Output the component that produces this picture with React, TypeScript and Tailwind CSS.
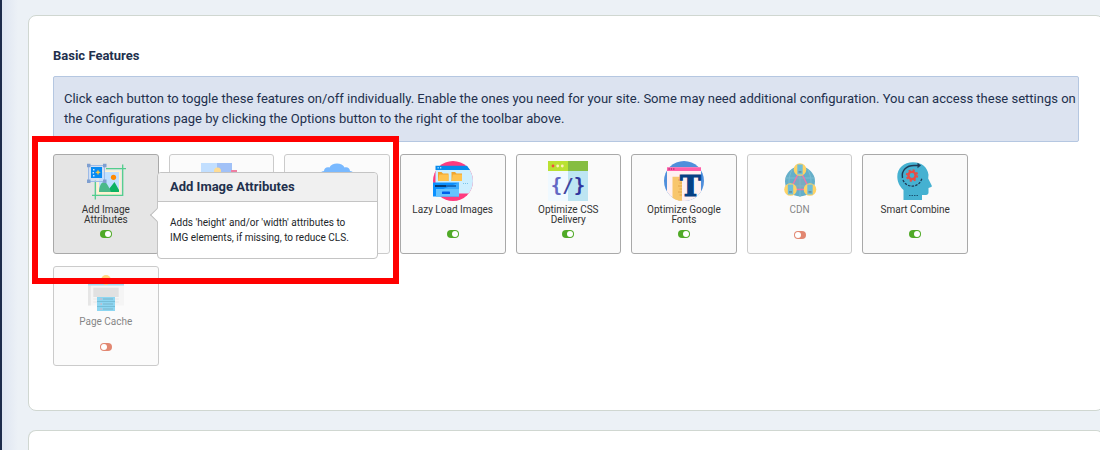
import type { ReactNode } from 'react'
import { clsx } from 'clsx'

interface Feature {
  name: string
  enabled: boolean
  icon: ReactNode
  hint?: string
}

function Icon({ children }: { children: ReactNode }) {
  return (
    <svg viewBox="0 0 40 40" className="h-10 w-10 shrink-0" aria-hidden="true">
      {children}
    </svg>
  )
}

function AttributesIcon() {
  return (
    <Icon>
      <path d="M10.700 9.500h24v24h-24z" fill="#fff3cf" />
      <path d="M13 11h20v20H13z" fill="#c0e0ff" />
      <circle cx="27.5" cy="16.3" r="2.6" fill="#ff8a00" />
      <path d="m20 31 1-4 2 1 5.500-7L33 29v2z" fill="#0cb262" />
      <path d="M13 31c0-6 2.500-10 5-10s5 5 7 10z" fill="#4bb98a" />
      <path d="M9.300 19v19.500M6 34.300h31M36.700 3.500V35M20 7.700h20" stroke="#52cd8d" strokeWidth="1.300" />
      <path d="M2.500 4.500h16v16h-16z" fill="#c9dcf8" fillOpacity=".7" stroke="#9dbbe8" />
      <path d="M1 2.700h3.500v3.500H1zM17 2.700h3.500v3.500H17zM1 18.500h3.500V22H1zM17 18.500h3.500V22H17z" fill="#7f9fd0" />
      <path d="M5 6h11v11H5z" fill="#078bf2" />
      <path d="m12 8.500.8 2 2 .8-2 .9-.8 2-.8-2-2-.9 2-.8z" fill="#ffc83c" />
      <path d="M7 8h1.500v1.500H7zM6.500 11H8v1.500H6.500zM7 14h1.500v1.500H7z" fill="#c9e8ff" />
    </Icon>
  )
}

function PictureIcon() {
  return (
    <Icon>
      <path d="M0 2h16v27H0z" fill="#9acbff" />
      <path d="M16 2h15v27H16z" fill="#6499f2" />
      <path d="m0 29 11-13 8 9 5-7 7 11z" fill="#40b983" />
      <circle cx="16.500" cy="10" r="3.500" fill="#ffc64d" />
      <path d="M30 9h6v25H11v-5h19z" fill="#e42b65" />
    </Icon>
  )
}

function CloudIcon() {
  return (
    <Icon>
      <path
        d="M3 17c-1-4 1-7 4-7 0-3 3-4.500 5.500-3.500 2-5.500 13-5.500 15 0 2.500-1 5.500.5 5.500 3.500 3 0 5 3 4 7v8H3z"
        fill="#218bff"
      />
    </Icon>
  )
}

function LazyIcon() {
  return (
    <Icon>
      <clipPath id="lazy-clip">
        <circle cx="20" cy="20" r="20" />
      </clipPath>
      <circle cx="20" cy="20" r="20" fill="#ff3b7f" />
      <path d="M2.500 8H40v24.500H2.500z" fill="#cdefff" clipPath="url(#lazy-clip)" />
      <path d="M2.500 4.700H34L37 9H2.500z" fill="#078bed" />
      <path d="M4.500 6h1.300v1.500H4.500zM7 6h1.300v1.500H7z" fill="#a2ddff" />
      <path d="M5 11h3.500l1.500 1.500h5.500V20H5zM18.500 11H22l1.500 1.500H29V20H18.500z" fill="#f0a52f" />
      <path d="M6.300 13.500h9.200V20H5zM19.800 13.500H29V20H18.500z" fill="#ffc34f" />
      <path d="M30 22.500h6" stroke="#79c4ec" strokeDasharray="1 1" />
      <path d="M0 21.500h26V35.500H0z" fill="#0a90ff" />
      <path d="M3 28h23v7.500H3z" fill="#65c3ff" />
      <path d="M26 21.500V35.500H3V31z" fill="#65c3ff" fillOpacity=".55" />
      <path d="M2 25h11" stroke="#073c73" strokeWidth="2" />
      <path d="M13 25h10" stroke="#176bbb" strokeWidth="2" />
      <rect x="9" y="30.500" width="8" height="2.500" rx=".6" fill="#005fe9" />
    </Icon>
  )
}

function CssIcon() {
  return (
    <Icon>
      <path d="M0 0h20v40H0z" fill="#f0f9ff" />
      <path d="M20 2h20v38H20z" fill="#bde5f2" />
      <path d="M0 0h20v10H0z" fill="#bae133" />
      <path d="M20 0h20v10H20z" fill="#86bd42" />
      <circle cx="5" cy="5" r="1.400" fill="#f24d3d" />
      <circle cx="9.700" cy="5" r="1.400" fill="#fff0bd" />
      <circle cx="14.300" cy="5" r="1.400" fill="#fff0bd" />
      <text x="20" y="31" textAnchor="middle" fontFamily="DejaVu Sans Mono, monospace" fontWeight="700" fontSize="19">
        <tspan fill="#6268c4">{'{'}</tspan>
        <tspan fill="#40449e">/</tspan>
        <tspan fill="#30359d">{'}'}</tspan>
      </text>
    </Icon>
  )
}

function FontIcon() {
  return (
    <Icon>
      <clipPath id="font-clip">
        <circle cx="20" cy="20" r="20" />
      </clipPath>
      <circle cx="20" cy="20" r="20" fill="#508fdb" />
      <path d="M3 6.300h34V40H3z" fill="#fff0f1" clipPath="url(#font-clip)" />
      <path d="M3 6.300h34V10H3z" fill="#ff5faa" />
      <path d="M4.500 8h6" stroke="#b52d74" strokeWidth="1.300" strokeDasharray="1.300 1" />
      <path d="M8.500 15.700H18v24H15c-3-.8-5-1.800-6.500-3z" fill="#f8c66c" />
      <path d="M14 19h4m-2.500 3H18m-4 3h4m-2.500 3H18m-4 3h4m-2.500 3H18" stroke="#dc9c42" strokeWidth=".8" />
      <text
        x="26.500"
        y="34.500"
        textAnchor="middle"
        fontFamily="DejaVu Serif, serif"
        fontWeight="700"
        fontSize="28"
        fill="#064084"
        stroke="#064084"
        strokeWidth="1.200"
      >
        T
      </text>
    </Icon>
  )
}

function CdnIcon() {
  return (
    <Icon>
      <circle cx="20" cy="20.500" r="15" fill="#007ba6" />
      <path d="M5.500 17h29M5.500 25h29M20 6v30M12 9c-4 7-4 17 0 24M28 9c4 7 4 17 0 24" fill="none" stroke="#2592b5" />
      <path d="M20 9 10.500 28.500h19z" fill="#3e708c" fillOpacity=".5" stroke="#e01d73" strokeWidth="1.500" />
      {['20 8.500', '10.500 28.500', '30 28.500'].map((position) => (
        <g key={position} transform={`translate(${position})`}>
          <circle r="6.300" fill="#ffb700" />
          <path d="M-2.700-5h5.400V5h-5.400z" fill="#1194be" />
          <path d="M-1.500 1.500h3v1.800h-3z" fill="#064f6b" />
        </g>
      ))}
    </Icon>
  )
}

function CombineIcon() {
  return (
    <Icon>
      <path
        d="M8.500 39V29C4 25 2.300 20 2.300 15.500 2.300 7 9 1.300 18 1.300c9 0 14.500 5 15.500 12.500l-.3 3.700 3.500 7c.4 1-.2 1.500-1.200 1.700L33.500 27v4.500c0 1.500-1 2.500-2.500 2.500h-4v5z"
        fill="#45b1d1"
      />
      <path d="M7.500 17C6 9 12 4.500 19 4.500h5" fill="none" stroke="#203a56" strokeWidth="1.400" />
      <path d="m22.500 1.800 3.500 2.700-3.500 2.700z" fill="#203a56" />
      <path d="M8 19c3 8 16 9 19-2" fill="none" stroke="#203a56" strokeWidth="1.300" strokeDasharray="2.500 1.200" />
      <path d="M14 34.500h10" stroke="#1b5675" strokeDasharray="1.500 1" />
      <circle cx="17" cy="14.500" r="3.600" fill="none" stroke="#e94d46" strokeWidth="2.400" />
      <circle cx="17" cy="14.500" r="5.300" fill="none" stroke="#e94d46" strokeWidth="1.800" strokeDasharray="2.100 2.063" />
    </Icon>
  )
}

function CacheIcon() {
  return (
    <Icon>
      <path d="M2 10h36v22.500H2z" fill="#efefef" />
      <path d="M2 12.500h2.800v20H2z" fill="#d6d6d6" />
      <path d="M2 10h36v2.500H2z" fill="#62c9ef" />
      <path d="M7.300 14.700h25.400V24H7.300z" fill="#cecece" />
      <path d="M7.300 26h3.500m18.500 0h3.500M7.300 29h3.500m18.500 0h3.500" stroke="#d6d6d6" />
      <circle cx="20" cy="7" r="5" fill="#ffb82e" />
      <path d="M11 24h18v14H11z" fill="#43bce9" />
      <path d="M11 28.500h18M11 33.500h18" stroke="#1c93bd" />
      <path d="M17 26h10M17 31h10M17 36h10" stroke="#237d9f" strokeWidth=".9" />
      <path d="M14.500 26H16M14.500 31H16M14.500 36H16" stroke="#eb6e79" />
    </Icon>
  )
}

function Toggle({ on }: { on: boolean }) {
  return (
    <svg viewBox="0 0 12 8" className={clsx('h-2 w-3 shrink-0', on ? 'mt-[5px]' : 'mt-1.5')} aria-hidden="true">
      <rect width="12" height="8" rx="4" fill={on ? '#50aa27' : '#cf3814'} />
      <circle cx={on ? 8 : 4} cy="4" r="3" fill="#fff" />
    </svg>
  )
}

const features: Feature[] = [
  {
    name: 'Add Image Attributes',
    enabled: true,
    icon: <AttributesIcon />,
    hint: "Adds 'height' and/or 'width' attributes to IMG elements, if missing, to reduce CLS.",
  },
  { name: '', enabled: false, icon: <PictureIcon /> },
  { name: '', enabled: false, icon: <CloudIcon /> },
  { name: 'Lazy Load Images', enabled: true, icon: <LazyIcon /> },
  { name: 'Optimize CSS Delivery', enabled: true, icon: <CssIcon /> },
  { name: 'Optimize Google Fonts', enabled: true, icon: <FontIcon /> },
  { name: 'CDN', enabled: false, icon: <CdnIcon /> },
  { name: 'Smart Combine', enabled: true, icon: <CombineIcon /> },
  { name: 'Page Cache', enabled: false, icon: <CacheIcon /> },
]

function Popover({ title, text }: { title: string; text: string }) {
  return (
    <div role="tooltip" className="absolute top-[18px] left-[104px] z-10 w-[221px] rounded border border-[#c4c4c4] bg-white">
      <span className="absolute top-[37px] -left-[6px] h-[10px] w-[10px] rotate-45 border-b border-l border-[#bbb] bg-white" />
      <h3 className="rounded-t border-b border-[#c4c4c4] bg-[#f0f0f0] px-3 py-1 text-[13px] leading-5 font-bold text-[#22304d]">
        {title}
      </h3>
      <p className="px-3 py-[13px] text-[10px] leading-[15px] text-[#212529]">{text}</p>
    </div>
  )
}

function FeatureTile({ feature }: { feature: Feature }) {
  return (
    <div className="relative">
      <button
        type="button"
        aria-pressed={feature.enabled}
        className={clsx(
          'flex h-[100px] w-full flex-col items-center rounded-[3px] border border-[#a9a9a9] px-2 pt-1.5 text-[#333]',
          feature.hint ? 'bg-[#e5e5e5]' : 'bg-[#fafafa]',
          !feature.enabled && 'opacity-60',
        )}
      >
        {feature.icon}
        <span className="mt-1 h-5 text-center text-[10px] leading-[10px]">{feature.name}</span>
        <Toggle on={feature.enabled} />
      </button>
      {feature.hint && <Popover title={feature.name} text={feature.hint} />}
    </div>
  )
}

export default function App() {
  return (
    <div className="flex h-screen overflow-hidden bg-[#ecf1f6] font-['Roboto',sans-serif] text-[#22304d]">
      <div className="w-0.5 shrink-0 bg-[#1c2b4b]" />
      <div className="w-4 shrink-0 bg-linear-to-r from-[#dee5f1] to-[#ecf1f6]" />
      <main className="-mr-1 flex min-w-0 grow flex-col gap-[19px] pt-[15px] pl-2.5">
        <section className="shrink-0 rounded-lg border border-[#d0d7d1] bg-white px-6 pt-[30px] pb-11">
          <h2 className="mb-2.5 text-[13px] leading-5 font-bold">Basic Features</h2>
          <p className="mb-3 rounded-xs border border-[#b5c7e1] bg-[#dce3f0] py-3 pl-2.5 text-[13px] leading-5">
            Click each button to toggle these features on/off individually. Enable the ones you need for your site. Some
            may need additional configuration. You can access these settings on the Configurations page by clicking the
            Options button to the right of the toolbar above.
          </p>
          <div className="relative grid max-w-[915px] grid-cols-8 gap-x-2.5 gap-y-3">
            {features.map((feature, index) => (
              <FeatureTile key={index} feature={feature} />
            ))}
            {/* Highlight frame around the hovered feature */}
            <div className="pointer-events-none absolute -top-[18px] -left-[21px] z-20 h-[148px] w-[367px] border-[6px] border-[#f00]" />
          </div>
        </section>
        <section className="grow rounded-t-lg border border-b-0 border-[#d0d7d1] bg-white" />
      </main>
    </div>
  )
}
